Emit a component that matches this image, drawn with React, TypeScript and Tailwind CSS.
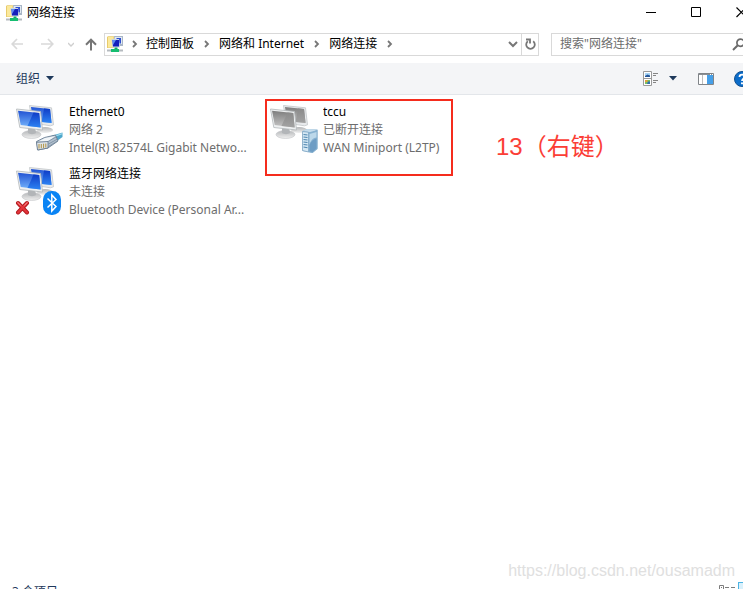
import { useState, type ReactNode } from 'react'

type AdapterKind = 'ethernet' | 'bluetooth' | 'vpn'

interface Adapter {
  id: string
  name: string
  status: string
  device: string
  kind: AdapterKind
  note?: string
}

const ADAPTERS: Adapter[] = [
  { id: 'eth0', name: 'Ethernet0', status: '网络 2', device: 'Intel(R) 82574L Gigabit Netwo...', kind: 'ethernet' },
  { id: 'tccu', name: 'tccu', status: '已断开连接', device: 'WAN Miniport (L2TP)', kind: 'vpn', note: '13（右键）' },
  { id: 'bt', name: '蓝牙网络连接', status: '未连接', device: 'Bluetooth Device (Personal Ar...', kind: 'bluetooth' },
]

const CRUMBS = ['控制面板', '网络和 Internet', '网络连接']

const NetworkFolderIcon = () => (
  <svg width="16" height="16" viewBox="0 0 16 16" className="shrink-0" aria-hidden="true">
    <path d="M0 1 1 .3h6V12H0z" fill="#e8cb6c" />
    <path d="M1 1h5.500v10.500H1z" fill="#fbe99c" />
    <path d="M7 0h9v10H8z" fill="#a9b6c6" />
    <path d="M8 1h7v7H8z" fill="#e1e9f2" />
    <path d="M9.500 2h4.500v5.500H9.500z" fill="#2f4fd0" />
    <path d="M4.500 3h7.500l1 8.500H5.500z" fill="#c9d5e4" />
    <path d="M5.500 4h6.500v6.500H6z" fill="#1420bb" />
    <path d="M5.500 4H9L6 9z" fill="#5d8cf2" />
    <path d="M7.500 11.500h3V14h-3z" fill="#12a862" />
    <path d="M0 13.500h16v2H0z" fill="#b5babf" />
    <path d="M4 13h8v3H4z" fill="#16bd70" />
  </svg>
)

const Chevron = () => (
  <svg width="6" height="8" viewBox="0 0 6 8" fill="none" stroke="#777" strokeWidth="1.800" aria-hidden="true">
    <path d="m1 1 3 3-3 3" />
  </svg>
)

const Caret = () => (
  <svg width="8" height="5" viewBox="0 0 8 5" aria-hidden="true">
    <path d="M0 0h8L4 4.500z" fill="#1e395b" />
  </svg>
)

const EthernetBadge = () => (
  <g>
    <path d="m36 33 11.500-3.500v4.500L42 38z" fill="#4fa8cc" />
    <path d="m39 33.500 8-2.700" stroke="#a8e0f2" strokeWidth="1.200" />
    <path d="m21.500 38.500 8-4 11-2.500 2.500 6-10 7-10 2z" fill="#b3c1cf" stroke="#61768c" strokeWidth=".8" />
    <path d="m23 38.500 7-3.500 10.500-2-7.500 5.500z" fill="#f1f5f8" />
    <path d="m33 38.500 8-4.500M33.500 41l9-5M33.500 43.500l9-5.500" stroke="#778b9e" strokeWidth=".8" />
    <path d="M21.500 39.300 33 38.500v6.500l-10.500 2z" fill="#dfe5ea" stroke="#5d7187" strokeWidth=".8" />
    <path d="M24 41v4.500M26.300 41v4.200M28.600 40.700V45M30.800 40.500v4" stroke="#b09242" strokeWidth="1" />
  </g>
)

const BluetoothBadge = () => (
  <g>
    <rect x="28" y="26" width="18" height="24" rx="8.500" fill="#0a84f4" />
    <path d="m32.500 33.500 8.500 8-4.200 4.500V30l4.200 4.500-8.500 8" fill="none" stroke="#fff" strokeWidth="1.500" />
    <path d="m3 38 9 9.500M12 38l-9 9.500" stroke="#b0181d" strokeWidth="4" strokeLinecap="round" />
    <path d="m3 38 9 9.500M12 38l-9 9.500" stroke="#e3343a" strokeWidth="2.400" strokeLinecap="round" />
    <path d="m3 37.700 2.500 2.600M12 37.700 9.500 40.300" stroke="#f79a9a" strokeWidth="1" strokeLinecap="round" />
  </g>
)

const ServerBadge = () => (
  <g>
    <path d="m33.500 28 5-2 10 .500v19l-5 4.500-10-2z" fill="#8db4d0" />
    <path d="m33.500 28 5-2 10 .500-5.500 3z" fill="#c5dcec" />
    <path d="m33.500 28.500 6 .800v19.700l-6-1.500z" fill="#d5e8f4" stroke="#7ba2c0" strokeWidth=".7" />
    <path d="m34.500 31.500 4 .500M34.500 34l4 .500M34.500 36.500l4 .500M34.500 39l4 .500M34.500 41.500l4 .500M34.500 44l4 .700" stroke="#4f86b0" strokeWidth="1.100" />
    <path d="m39.500 29.500 9-2.500v19l-5 4-4-1z" fill="#87b1d0" />
    <path d="M40.500 31 47.500 29v5.500c-4 .5-6 3.500-7 7.500z" fill="#bcd8ea" />
    <path d="M40.500 42c2-4 4-6 7-6.500v10L43.500 49l-3-.8z" fill="#6e9dc4" />
  </g>
)

const AdapterIcon = ({ kind }: { kind: AdapterKind }) => {
  const off = kind === 'vpn'
  const screen = `screen-${kind}`
  const shade = `shade-${kind}`
  const stand = `stand-${kind}`

  return (
    <svg width="49" height="50" viewBox="0 0 49 50" className="-mr-px shrink-0" aria-hidden="true">
      <defs>
        <linearGradient id={screen} x1="0" y1="0" x2="0" y2="1">
          <stop offset="0" stopColor={off ? '#7d7d7d' : '#2253d3'} />
          <stop offset="1" stopColor={off ? '#c6c6c6' : '#76b6fd'} />
        </linearGradient>
        <linearGradient id={shade} x1="0" y1="0" x2="0" y2="1">
          <stop offset="0" stopColor={off ? '#8a8a8a' : '#0f3cc6'} />
          <stop offset="1" stopColor={off ? '#a2a2a2' : '#2d83f3'} />
        </linearGradient>
        <linearGradient id={stand} x1="0" y1="0" x2="0" y2="1">
          <stop offset="0" stopColor="#b4b6b8" />
          <stop offset="1" stopColor="#f0f0f0" />
        </linearGradient>
      </defs>
      <ellipse cx="30" cy="27" rx="8" ry="3" fill={`url(#${stand})`} />
      <path d="M14.500 2.500 36.500 4.800 38.500 21.800l-3 1L17 20z" fill="#e8eaec" stroke="#bcc0c3" strokeWidth=".7" />
      <path d="m16 4 19 2 1.600 14L18 18z" fill={`url(#${screen})`} />
      <path d="m29 5.400 6 .6 1.600 14-10-1z" fill={`url(#${shade})`} />
      <ellipse cx="16.500" cy="31.500" rx="9.500" ry="4" fill={`url(#${stand})`} stroke="#c3c5c7" strokeWidth=".6" />
      <path d="M13 25h7l1 5c-2 1.500-6 1.500-8 0z" fill="#b2b5b8" />
      <path d="M1.500 6 25.500 8.500l2 18.500L4.800 24.500z" fill="#eef0f1" stroke="#b3b7ba" strokeWidth=".8" />
      <path d="M3 7.700 24.200 10l1.500 14.500L5.700 22z" fill={`url(#${screen})`} />
      <path d="M18.500 9.400 24.200 10l1.500 14.500-13.200-1.600z" fill={`url(#${shade})`} />
      {kind === 'ethernet' && <EthernetBadge />}
      {kind === 'bluetooth' && <BluetoothBadge />}
      {kind === 'vpn' && <ServerBadge />}
    </svg>
  )
}

const WindowButton = ({ label, children }: { label: string; children: ReactNode }) => (
  <button aria-label={label} className="flex w-[45px] items-center justify-center hover:bg-gray-200">
    <svg width="11" height="11" viewBox="0 0 11 11" fill="none" stroke="#000" aria-hidden="true">
      {children}
    </svg>
  </button>
)

const TitleBar = () => (
  <header className="flex h-[25px] shrink-0 justify-between">
    <div className="flex items-center gap-[5px] pl-[6px]">
      <NetworkFolderIcon />
      <h1>网络连接</h1>
    </div>
    <div className="flex">
      <WindowButton label="最小化"><path d="M0 5.500h10" /></WindowButton>
      <WindowButton label="最大化"><path d="M.5.500h9v9h-9z" /></WindowButton>
      <WindowButton label="关闭"><path d="m.5 .5 9.500 9.500M10 .5.500 10" strokeWidth="1.200" /></WindowButton>
    </div>
  </header>
)

const AddressRow = () => {
  const [query, setQuery] = useState('')

  return (
    <div className="flex h-[38px] shrink-0 items-center pr-3 pl-[11px]">
      <nav className="flex w-[93px] shrink-0 items-center">
        <button aria-label="后退" className="w-[30px]">
          <svg width="13" height="12" viewBox="0 0 13 12" fill="none" stroke="#d9d9d9" strokeWidth="1.700" aria-hidden="true">
            <path d="M12 6H1.500M6 1 1.200 6 6 11" />
          </svg>
        </button>
        <button aria-label="前进" className="w-[27px]">
          <svg width="13" height="12" viewBox="0 0 13 12" fill="none" stroke="#d9d9d9" strokeWidth="1.700" aria-hidden="true">
            <path d="M0 6h11.500M7 1l4.800 5L7 11" />
          </svg>
        </button>
        <button aria-label="最近浏览的位置" className="w-[17px]">
          <svg width="6" height="5" viewBox="0 0 6 5" fill="none" stroke="#cfcfcf" strokeWidth="1.400" aria-hidden="true">
            <path d="m0 1 3 3 3-3" />
          </svg>
        </button>
        <button aria-label="上移">
          <svg width="12" height="13" viewBox="0 0 12 13" fill="none" stroke="#757575" strokeWidth="2" aria-hidden="true">
            <path d="M6 12.500V2M1 6.700l5-5 5 5" />
          </svg>
        </button>
      </nav>

      <div className="flex h-[23px] flex-1 items-stretch border border-[#d9d9d9]">
        <ol className="flex flex-1 items-center pl-[2px]">
          <li className="flex items-center">
            <NetworkFolderIcon />
            <span className="flex w-[23px] justify-center"><Chevron /></span>
          </li>
          {CRUMBS.map((crumb) => (
            <li key={crumb} className="flex items-center">
              <a href="#" className="hover:underline">{crumb}</a>
              <span className="flex w-[25px] justify-center"><Chevron /></span>
            </li>
          ))}
        </ol>
        <button aria-label="以前的位置" className="flex w-4 items-center justify-center">
          <svg width="10" height="7" viewBox="0 0 10 7" fill="none" stroke="#777" strokeWidth="2" aria-hidden="true">
            <path d="m1 1 4 4 4-4" />
          </svg>
        </button>
        <button aria-label="刷新" className="flex w-[17px] items-center justify-center border-l border-[#d9d9d9]">
          <svg width="11" height="12" viewBox="0 0 11 12" fill="none" stroke="#777" strokeWidth="1.800" aria-hidden="true">
            <path d="M8.200 3.200A4.300 4.300 0 1 1 2.800 3.200" />
            <path d="M1 1.500h4v4" />
          </svg>
        </button>
      </div>

      <label className="ml-3 flex h-[23px] w-[201px] items-center border border-[#d9d9d9] pr-[5px] pl-2">
        <input
          aria-label="搜索网络连接"
          value={query}
          onChange={(e) => setQuery(e.target.value)}
          placeholder={'搜索"网络连接"'}
          className="min-w-0 flex-1 outline-none placeholder:text-[#6d6d6d]"
        />
        <svg width="14" height="13" viewBox="0 0 14 13" fill="none" stroke="#6a6a6a" strokeWidth="1.700" aria-hidden="true">
          <circle cx="8.500" cy="4.700" r="3.600" />
          <path d="M5.800 7.300 1 12" strokeWidth="2" />
        </svg>
      </label>
    </div>
  )
}

const CommandBar = () => (
  <div className="flex h-8 shrink-0 items-center justify-between border-b border-[#e3e6ea] bg-[#f4f5f7] pr-[14px] pl-4 text-[#1e395b]">
    <button className="flex items-center gap-[6px]">
      组织
      <Caret />
    </button>
    <div className="flex items-center">
      <button aria-label="更改视图" className="mr-[10px]">
        <svg width="16" height="15" viewBox="0 0 16 15" aria-hidden="true">
          <path d="M.5.5h8v14h-8zM.5 7.500h8" fill="#fff" stroke="#9a9a9a" />
          <path d="M2 2h5v4H2z" fill="#a9d6f7" />
          <path d="m2 5 2.500-1.500L7 4.500V6H2z" fill="#25579b" />
          <path d="M2 9h5v4H2z" fill="#7dbf62" />
          <path d="M2 9h2.500v2H2z" fill="#e4a13c" />
          <path d="M5 10.500h2V13H4z" fill="#316fb6" />
          <path d="M10 2.500h5M10 4.500h3M10 9.500h5M10 11.500h3" stroke="#858585" />
        </svg>
      </button>
      <button aria-label="更多选项" className="mr-[21px]"><Caret /></button>
      <button aria-label="显示预览窗格" className="mr-5">
        <svg width="16" height="12" viewBox="0 0 16 12" aria-hidden="true">
          <path d="M.5.5h15v11H.5z" fill="#fff" stroke="#808488" />
          <path d="M1 1h14v1H1z" fill="#8b8f94" />
          <path d="M9 2h6v9H9z" fill="#459fe8" />
          <path d="M4.500 2v9" stroke="#bdbdbd" />
          <path d="M12 1h1v1h-1zM14 1h1v1h-1z" fill="#fff" />
        </svg>
      </button>
      <button aria-label="获取帮助">
        <svg width="16" height="16" viewBox="0 0 16 16" aria-hidden="true">
          <circle cx="8" cy="8" r="7.500" fill="#0b6cc9" stroke="#12508f" />
          <path d="M5.500 6C5.500 2.800 10.500 2.900 10.500 5.800 10.500 7.600 8 7.800 8 10" fill="none" stroke="#fff" strokeWidth="1.800" />
          <circle cx="8" cy="12.300" r="1.100" fill="#fff" />
        </svg>
      </button>
    </div>
  </div>
)

const AdapterTile = ({ adapter }: { adapter: Adapter }) => (
  <li className="relative flex h-[62px] w-[254px] items-start gap-[6px] pt-[3px] pl-[5px]">
    <AdapterIcon kind={adapter.kind} />
    <div className="min-w-0 flex-1 leading-[18px] text-[#6d6d6d]">
      <p className="truncate text-black">{adapter.name}</p>
      <p className="truncate">{adapter.status}</p>
      <p className="truncate">{adapter.device}</p>
    </div>
    {adapter.note && (
      <>
        <span className="absolute -top-px left-[1px] h-[77px] w-[188px] border-2 border-[#f52c1d]" />
        <span className="absolute top-[29px] left-[232px] font-['Liberation_Sans','Noto_Sans_CJK_SC',sans-serif] text-2xl leading-9 whitespace-nowrap text-[#fb3e36]">
          {adapter.note}
        </span>
      </>
    )}
  </li>
)

const StatusBar = () => (
  <footer className="flex h-[22px] shrink-0 items-center justify-between pr-1 pl-3 text-[#1e395b]">
    <span>{ADAPTERS.length} 个项目</span>
    <div className="flex items-start">
      <button aria-label="详细信息" className="flex w-[19px] pt-[3px]">
        <svg width="16" height="13" viewBox="0 0 16 13" fill="none" stroke="#7d7d7d" aria-hidden="true">
          <path d="M.5.5h4v4h-4zM.5 8.500h4v4h-4zM6 2.500h4M12 2.500h4M6 10.500h4M12 10.500h4" />
          <path d="M2 2h1v1H2zM2 10h1v1H2z" fill="#7d7d7d" stroke="none" />
        </svg>
      </button>
      <button aria-label="大图标" className="h-5 w-[22px] border border-[#4cb4e4] bg-[#d9f0fb]" />
    </div>
  </footer>
)

export default function App() {
  return (
    <div className="relative h-screen overflow-hidden bg-white">
      {/* the window runs past the right and bottom edges of the view */}
      <div className="flex h-[calc(100vh+14px)] w-[calc(100%+21px)] flex-col font-['Noto_Sans','Noto_Sans_CJK_SC',sans-serif] text-xs text-black">
        <TitleBar />
        <AddressRow />
        <CommandBar />
        <main className="flex-1 pt-[5px] pl-[10px]">
          <ul className="flex w-[508px] flex-wrap">
            {ADAPTERS.map((adapter) => (
              <AdapterTile key={adapter.id} adapter={adapter} />
            ))}
          </ul>
        </main>
        <StatusBar />
      </div>
      <p className="absolute right-2 bottom-[6px] font-['Liberation_Sans',sans-serif] text-base leading-6 text-[#e0e0e0]">
        https://blog.csdn.net/ousamadm
      </p>
    </div>
  )
}
